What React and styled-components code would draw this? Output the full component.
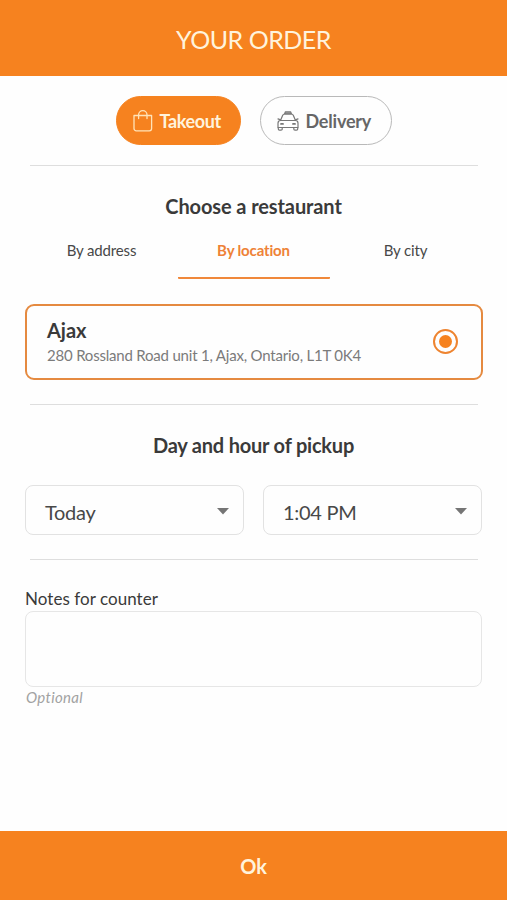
import React, { useState } from 'react';
import styled, { createGlobalStyle } from 'styled-components';

const GlobalStyle = createGlobalStyle`
    * {
        box-sizing: border-box;
    }
    body {
        margin: 0;
        background: #fefefe;
        color: #3a3a3a;
        font-family: Lato, 'Open Sans', sans-serif;
        font-variant-ligatures: none;
    }
    button {
        font-family: inherit;
        font-variant-ligatures: none;
        cursor: pointer;
    }
`;

const Page = styled.div`
    display: flex;
    flex-direction: column;
    height: 100vh;
    min-height: 900px;
`;

const Header = styled.header`
    display: flex;
    align-items: center;
    justify-content: center;
    height: 76px;
    padding-top: 1px;
    background: #f6821f;
`;

const PageTitle = styled.h1`
    margin: 0;
    color: #fff3dc;
    font-size: 25px;
    font-weight: 400;
    line-height: 30px;
    letter-spacing: -.5px;
`;

const Main = styled.main`
    flex: 1;
    padding: 20px 25px 0;
`;

const Options = styled.div`
    display: flex;
    justify-content: center;
    gap: 19px;
`;

const Option = styled.button`
    display: flex;
    align-items: center;
    gap: ${props => props.$gap};
    width: ${props => props.$width};
    height: 49px;
    padding: 0 0 0 16px;
    border: 1px solid ${props => props.$active ? '#f6821f' : '#b9b9b9'};
    border-radius: 25px;
    background: ${props => props.$active ? '#f6821f' : '#fefefe'};
    color: ${props => props.$active ? '#fff3dc' : '#666'};
    font-size: 18px;
    font-weight: 700;
    line-height: 22px;
    letter-spacing: ${props => props.$spacing};
    white-space: nowrap;

    svg {
        flex: none;
    }
    span {
        padding-top: 1px;
    }
`;

const Divider = styled.hr`
    height: 1px;
    margin: ${props => props.$top} 4px 0 5px;
    border: 0;
    background: #dedede;
`;

const SectionTitle = styled.h2`
    margin: 28px 0 0;
    font-size: 20px;
    font-weight: 700;
    line-height: 24px;
    letter-spacing: ${props => props.$spacing};
    text-align: center;
`;

const Tabs = styled.div`
    display: grid;
    grid-template-columns: repeat(3, 152px);
    justify-content: center;
    margin-top: 22px;
`;

const Tab = styled.button`
    height: 39px;
    padding: 0 0 17px;
    border: 0;
    border-bottom: 2px solid ${props => props.$active ? '#f0883a' : 'transparent'};
    border-radius: 1px;
    background: none;
    color: ${props => props.$active ? '#ee8237' : '#484848'};
    font-size: 15px;
    font-weight: ${props => props.$active ? 700 : 400};
    line-height: 20px;
    letter-spacing: -.15px;
`;

const Restaurant = styled.div`
    display: flex;
    align-items: center;
    justify-content: space-between;
    width: 458px;
    height: 76px;
    margin-top: 25px;
    padding: 0 23px 0 20px;
    border: 2px solid #e58a40;
    border-radius: 9px;
`;

const Name = styled.div`
    padding-top: 1px;
    font-size: 20px;
    font-weight: 700;
    line-height: 25px;
`;

const Address = styled.div`
    color: #7b7b7b;
    font-size: 15px;
    line-height: 24px;
    letter-spacing: -.2px;
`;

const Radio = styled.span`
    display: flex;
    align-items: center;
    justify-content: center;
    width: 25px;
    height: 25px;
    margin-bottom: 1px;
    border: 2px solid #ee8430;
    border-radius: 50%;

    &::after {
        content: '';
        width: 13px;
        height: 13px;
        border-radius: 50%;
        background: #f6821f;
    }
`;

const Pickup = styled.div`
    display: grid;
    grid-template-columns: 219px 219px;
    gap: 19px;
    margin-top: 28px;
`;

const Select = styled.button`
    display: flex;
    align-items: center;
    justify-content: space-between;
    height: 50px;
    padding: 0 14px 0 19px;
    border: 1px solid #e2e2e2;
    border-radius: 8px;
    background: #fefefe;
    color: #484848;
    font-size: 20px;
    line-height: 24px;
    letter-spacing: -.3px;

    span {
        padding-top: 4px;
    }
    svg {
        margin-top: 2px;
    }
`;

const Label = styled.label`
    display: block;
    margin-top: 27px;
    font-size: 17px;
    line-height: 24px;
    letter-spacing: .05px;
`;

const Notes = styled.textarea`
    display: block;
    width: 457px;
    height: 76px;
    padding: 10px;
    border: 1px solid #e6e6e6;
    border-radius: 8px;
    background: #fefefe;
    font: inherit;
    resize: none;
`;

const Hint = styled.div`
    padding-left: 1px;
    color: #a2a2a2;
    font-size: 15px;
    font-style: italic;
    line-height: 20px;
    letter-spacing: .3px;
`;

const Submit = styled.button`
    height: 69px;
    padding: 0;
    border: 0;
    background: #f6821f;
    color: #fff3dc;
    font-size: 20px;
    font-weight: 700;
    line-height: 24px;
`;

const BagIcon = () => (
    <svg width="20" height="22" viewBox="0 0 20 22" fill="none" stroke="#ffe3b8" strokeWidth="1.3">
        <path d="M1 5.5h17.6v13a2.3 2.3 0 0 1-2.3 2.3h-13A2.3 2.3 0 0 1 1 18.500z" strokeLinejoin="round" />
        <path d="M5.600 8.500V4.900a4.200 4.200 0 0 1 8.400 0V8.500" strokeLinecap="round" />
    </svg>
);

const TaxiIcon = () => (
    <svg width="22" height="20" viewBox="0 0 22 20" fill="none" stroke="#777" strokeWidth="1.2" strokeLinejoin="round" strokeLinecap="round">
        <path d="M7.600 3 8.300 .9h5.400l.7 2.100z" fill="#aaa" />
        <path d="M3.500 9.500 5.600 4.400Q6.200 3 7.600 3h6.800q1.400 0 2 1.400l2.100 5.100" />
        <path d="M3.600 9.500h14.800q2.600 0 2.600 2.700v4.300H1v-4.300q0-2.700 2.600-2.700z" />
        <path d="M1.300 16.500v1.500q0 1.200 1.200 1.200h1.500q1.200 0 1.200-1.200v-1.500M16.800 16.500v1.500q0 1.200 1.200 1.200h1.500q1.200 0 1.200-1.200v-1.500" />
        <path d="M1 7.900l2.500 1M21 7.900l-2.500 1" />
        <path d="M4 12.900h2M16 12.900h2" strokeWidth="1.800" />
    </svg>
);

const Caret = () => (
    <svg width="12" height="7" viewBox="0 0 12 7" fill="#757575">
        <path d="M0 0h12L6 6.5z" />
    </svg>
);

const tabs = ['By address', 'By location', 'By city'];

const App = () => {

    const [ mode, setMode ] = useState('takeout');
    const [ tab, setTab ] = useState('By location');

    return (
        <>
            <GlobalStyle />
            <Page>
                <Header>
                    <PageTitle>YOUR ORDER</PageTitle>
                </Header>

                <Main>
                    <Options>
                        <Option
                            $active={mode === 'takeout'}
                            $width="125px"
                            $gap="7px"
                            $spacing="-.35px"
                            onClick={() => setMode('takeout')}
                        >
                            <BagIcon />
                            <span>Takeout</span>
                        </Option>
                        <Option
                            $active={mode === 'delivery'}
                            $width="132px"
                            $gap="7px"
                            $spacing="-.2px"
                            onClick={() => setMode('delivery')}
                        >
                            <TaxiIcon />
                            <span>Delivery</span>
                        </Option>
                    </Options>

                    <Divider $top="20px" />

                    <SectionTitle $spacing="-.1px">Choose a restaurant</SectionTitle>
                    <Tabs>
                        {tabs.map(name => (
                            <Tab
                                key={name}
                                $active={tab === name}
                                onClick={() => setTab(name)}
                            >{name}</Tab>
                        ))}
                    </Tabs>

                    <Restaurant>
                        <div>
                            <Name>Ajax</Name>
                            <Address>280 Rossland Road unit 1, Ajax, Ontario, L1T 0K4</Address>
                        </div>
                        <Radio />
                    </Restaurant>

                    <Divider $top="24px" />

                    <SectionTitle $spacing="-.2px">Day and hour of pickup</SectionTitle>
                    <Pickup>
                        <Select>
                            <span>Today</span>
                            <Caret />
                        </Select>
                        <Select>
                            <span>1:04 PM</span>
                            <Caret />
                        </Select>
                    </Pickup>

                    <Divider $top="24px" />

                    <Label htmlFor="notes">Notes for counter</Label>
                    <Notes id="notes" />
                    <Hint>Optional</Hint>
                </Main>

                <Submit>Ok</Submit>
            </Page>
        </>
    );
}

export default App;
